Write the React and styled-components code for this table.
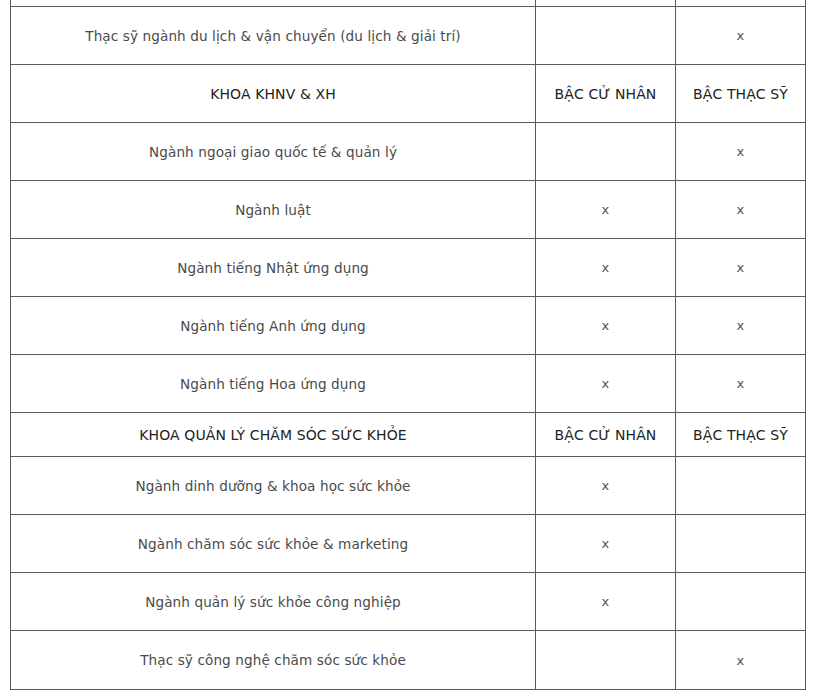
import React from 'react';
import styled, { createGlobalStyle } from 'styled-components';

const GlobalStyle = createGlobalStyle`
    html, body {
        margin: 0;
        padding: 0;
        background: #ffffff;
    }
    body {
        font-family: 'DejaVu Sans', 'Liberation Sans', sans-serif;
        color: #333333;
    }
`;

const rows = [
    { type: 'group', name: 'KHOA KHNV & XH', tall: true },
    { name: 'Ngành ngoại giao quốc tế & quản lý', bachelor: false, master: true },
    { name: 'Ngành luật', bachelor: true, master: true },
    { name: 'Ngành tiếng Nhật ứng dụng', bachelor: true, master: true },
    { name: 'Ngành tiếng Anh ứng dụng', bachelor: true, master: true },
    { name: 'Ngành tiếng Hoa ứng dụng', bachelor: true, master: true },
    { type: 'group', name: 'KHOA QUẢN LÝ CHĂM SÓC SỨC KHỎE', tall: false },
    { name: 'Ngành dinh dưỡng & khoa học sức khỏe', bachelor: true, master: false },
    { name: 'Ngành chăm sóc sức khỏe & marketing', bachelor: true, master: false },
    { name: 'Ngành quản lý sức khỏe công nghiệp', bachelor: true, master: false },
    { name: 'Thạc sỹ công nghệ chăm sóc sức khỏe', bachelor: false, master: true, last: true },
];

// Majors table
export default () => {
    return (
        <Page>
            <GlobalStyle />
            <Table>
                <colgroup>
                    <col style={{ width: 525 }} />
                    <col style={{ width: 140 }} />
                    <col style={{ width: 130 }} />
                </colgroup>
                <tbody>
                    <Row height={6}>
                        <Cut />
                        <Cut />
                        <Cut />
                    </Row>
                    <Row height={58}>
                        <Cell>Thạc sỹ ngành du lịch &amp; vận chuyển (du lịch &amp; giải trí)</Cell>
                        <Cell />
                        <Mark>x</Mark>
                    </Row>
                    {rows.map((row, i) =>
                        row.type === 'group' ? (
                            <Row key={i} height={row.tall ? 58 : 44}>
                                <Head>{row.name}</Head>
                                <Head>BẬC CỬ NHÂN</Head>
                                <Head>BẬC THẠC SỸ</Head>
                            </Row>
                        ) : (
                            <Row key={i} height={row.last ? 59 : 58}>
                                <Cell>{row.name}</Cell>
                                <Mark>{row.bachelor ? 'x' : ''}</Mark>
                                <Mark>{row.master ? 'x' : ''}</Mark>
                            </Row>
                        )
                    )}
                </tbody>
            </Table>
        </Page>
    );
};

const Page = styled.div`
    padding: 0 0 0 10px;
    width: 816px;
    box-sizing: border-box;
`;

const Table = styled.table`
    border-collapse: collapse;
    table-layout: fixed;
    width: 795px;
`;

const Row = styled.tr`
    height: ${({ height }) => height + 'px'};
`;

const Cell = styled.td`
    border: 1px solid #5a5a5a;
    padding: 0 8px;
    text-align: center;
    vertical-align: middle;
    font-size: 13.6px;
    color: #4a4a4a;
    letter-spacing: 0.1px;
    padding-top: 1px;
`;

const Cut = styled(Cell)`
    border-top: none;
    padding: 0;
`;

const Mark = styled(Cell)`
    font-size: 13px;
    color: #555555;
`;

const Head = styled(Cell)`
    font-size: 14px;
    color: #222222;
    text-transform: uppercase;
    letter-spacing: 0.1px;
`;
